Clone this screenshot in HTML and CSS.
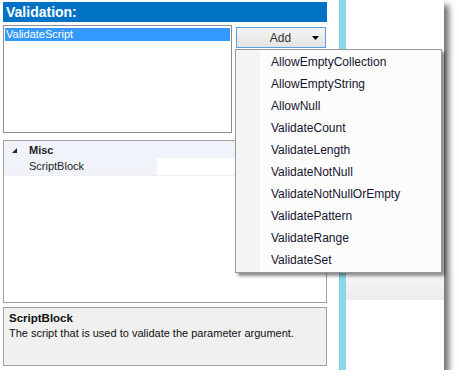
FILE: index.html
```html
<!DOCTYPE html>
<html lang="en">
<head>
<meta charset="UTF-8">
<title>Validation</title>
<link rel="stylesheet" href="styles.css">
</head>
<body>
<div class="window">
  <div class="left">
    <div class="title">Validation:</div>
    <div class="list-row">
      <div class="listbox">
        <div class="list-item selected">ValidateScript</div>
      </div>
      <button type="button" class="add-btn">
        <span>Add</span>
        <svg width="7" height="4" viewBox="0 0 7 4"><polygon points="0,0 7,0 3.5,4" fill="#000"/></svg>
      </button>
    </div>
    <div class="grid">
      <div class="cat-row">
        <svg class="expander" width="5" height="5" viewBox="0 0 5 5"><polygon points="5,0 5,5 0,5" fill="#262626"/></svg>
        <span>Misc</span>
      </div>
      <div class="prop-row">
        <div class="prop-name">ScriptBlock</div>
        <div class="prop-value"></div>
      </div>
    </div>
    <div class="desc">
      <div class="desc-title">ScriptBlock</div>
      <div class="desc-text">The script that is used to validate the parameter argument.</div>
    </div>
  </div>
  <div class="divider"></div>
  <div class="right">
    <div class="band"></div>
  </div>

  <ul class="menu">
    <li>AllowEmptyCollection</li>
    <li>AllowEmptyString</li>
    <li>AllowNull</li>
    <li>ValidateCount</li>
    <li>ValidateLength</li>
    <li>ValidateNotNull</li>
    <li>ValidateNotNullOrEmpty</li>
    <li>ValidatePattern</li>
    <li>ValidateRange</li>
    <li>ValidateSet</li>
  </ul>
</div>
</body>
</html>
```

FILE: styles.css
```css
body {
  margin: 0;
  background-color: #fff;
  font-family: "Liberation Sans", Arial, sans-serif;
}

.window {
  position: relative;
  display: flex;
  width: 444px;
  height: 370px;
  background-color: #fff;
  box-shadow: 5px 5px 6px rgba(0, 0, 0, 0.55);
}

.left {
  width: 324px;
  padding: 2px 0 0 3px;
  display: flex;
  flex-direction: column;
}

.title {
  height: 20px;
  line-height: 20px;
  padding-left: 3px;
  background-color: #0072c6;
  color: #fff;
  font-weight: bold;
  font-size: 14px;
}

.list-row {
  display: flex;
  align-items: flex-start;
  gap: 4px;
  margin-top: 3px;
}

.listbox {
  width: 229px;
  height: 108px;
  box-sizing: border-box;
  border: 1px solid #8c8c8c;
  padding: 2px 1px;
}

.list-item {
  height: 13px;
  line-height: 13px;
  font-size: 11px;
  padding-left: 1px;
  color: #000;
}

.list-item.selected {
  background-color: #3399ff;
  color: #fff;
}

.add-btn {
  display: flex;
  align-items: center;
  width: 90px;
  height: 21px;
  margin-top: 2px;
  padding: 0 6px 0 12px;
  box-sizing: border-box;
  border: 1px solid #5aa0e0;
  background: linear-gradient(#f4f4f4, #e4e4e4);
  font-family: "Liberation Sans", Arial, sans-serif;
  font-size: 12px;
  color: #333;
}

.add-btn span {
  flex: 1;
  text-align: center;
}

.grid {
  margin-top: 7px;
  height: 163px;
  box-sizing: border-box;
  border: 1px solid #a0a0a0;
  font-size: 11px;
  color: #1e1e1e;
}

.cat-row {
  display: flex;
  align-items: center;
  height: 17px;
  background-color: #f0f4fa;
  font-weight: bold;
}

.expander {
  margin: 1px 0 0 8px;
}

.cat-row span {
  margin-left: 12px;
}

.prop-row {
  display: flex;
  height: 17px;
  border-bottom: 1px solid #f0f0f0;
}

.prop-name {
  width: 153px;
  line-height: 17px;
  padding-left: 25px;
  box-sizing: border-box;
  background-color: #f0f4fa;
}

.prop-value {
  flex: 1;
  background-color: #fff;
}

.desc {
  margin-top: 4px;
  height: 59px;
  box-sizing: border-box;
  border: 1px solid #a0a0a0;
  background-color: #f0f0f0;
  padding: 3px 0 0 5px;
  font-size: 11px;
  color: #111;
}

.desc-title {
  font-weight: bold;
  font-size: 11.5px;
  line-height: 15px;
}

.desc-text {
  line-height: 15px;
}

.divider {
  width: 7px;
  margin-left: 12px;
  background-color: #86dbe6;
  border-left: 1px solid #7ccfdb;
  box-sizing: border-box;
}

.right {
  flex: 1;
}

.band {
  margin-top: 275px;
  height: 25px;
  background: linear-gradient(#f7f7f7, #ebebeb);
}

.menu {
  position: absolute;
  left: 235px;
  top: 49px;
  width: 207px;
  height: 224px;
  box-sizing: border-box;
  margin: 0;
  padding: 1px;
  list-style: none;
  border: 1px solid #979797;
  background: linear-gradient(to right, #f4f4f4 0, #f4f4f4 24px, #fcfcfc 24px);
  box-shadow: 3px 3px 3px rgba(0, 0, 0, 0.45);
  font-size: 12px;
  color: #15152e;
}

.menu li {
  height: 22px;
  line-height: 22px;
  padding-left: 34px;
}
```
